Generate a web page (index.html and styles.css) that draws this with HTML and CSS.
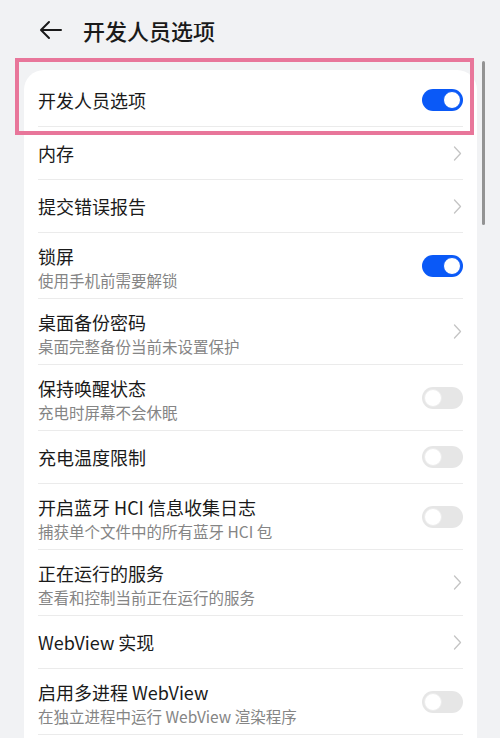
FILE: index.html
```html
<!DOCTYPE html>
<html lang="zh-CN">
<head>
<meta charset="utf-8">
<link rel="stylesheet" href="styles.css">
</head>
<body>
<div class="page">
  <header class="topbar">
    <svg class="back" width="24" height="20" viewBox="0 0 24 20"><path d="M22 10H3M10 2L2 10l8 8" fill="none" stroke="#1a1a1a" stroke-width="2" stroke-linecap="round" stroke-linejoin="round"/></svg>
    <h1 class="title">开发人员选项</h1>
  </header>

  <div class="card">
    <div class="row single"><div class="text"><div class="t">开发人员选项</div></div><span class="toggle on"></span></div>
    <div class="row single"><div class="text"><div class="t">内存</div></div><svg class="chev" width="9" height="15" viewBox="0 0 9 15"><path d="M1.5 1l6 6.5-6 6.5" fill="none" stroke="#c4c4c4" stroke-width="1.3" stroke-linecap="round" stroke-linejoin="round"/></svg></div>
    <div class="row single"><div class="text"><div class="t">提交错误报告</div></div><svg class="chev" width="9" height="15" viewBox="0 0 9 15"><path d="M1.5 1l6 6.5-6 6.5" fill="none" stroke="#c4c4c4" stroke-width="1.3" stroke-linecap="round" stroke-linejoin="round"/></svg></div>
    <div class="row double"><div class="text"><div class="t">锁屏</div><div class="s">使用手机前需要解锁</div></div><span class="toggle on"></span></div>
    <div class="row double"><div class="text"><div class="t">桌面备份密码</div><div class="s">桌面完整备份当前未设置保护</div></div><svg class="chev" width="9" height="15" viewBox="0 0 9 15"><path d="M1.5 1l6 6.5-6 6.5" fill="none" stroke="#c4c4c4" stroke-width="1.3" stroke-linecap="round" stroke-linejoin="round"/></svg></div>
    <div class="row double"><div class="text"><div class="t">保持唤醒状态</div><div class="s">充电时屏幕不会休眠</div></div><span class="toggle"></span></div>
    <div class="row single"><div class="text"><div class="t">充电温度限制</div></div><span class="toggle"></span></div>
    <div class="row double"><div class="text"><div class="t">开启蓝牙 HCI 信息收集日志</div><div class="s">捕获单个文件中的所有蓝牙 HCI 包</div></div><span class="toggle"></span></div>
    <div class="row double"><div class="text"><div class="t">正在运行的服务</div><div class="s">查看和控制当前正在运行的服务</div></div><svg class="chev" width="9" height="15" viewBox="0 0 9 15"><path d="M1.5 1l6 6.5-6 6.5" fill="none" stroke="#c4c4c4" stroke-width="1.3" stroke-linecap="round" stroke-linejoin="round"/></svg></div>
    <div class="row single"><div class="text"><div class="t">WebView 实现</div></div><svg class="chev" width="9" height="15" viewBox="0 0 9 15"><path d="M1.5 1l6 6.5-6 6.5" fill="none" stroke="#c4c4c4" stroke-width="1.3" stroke-linecap="round" stroke-linejoin="round"/></svg></div>
    <div class="row double"><div class="text"><div class="t">启用多进程 WebView</div><div class="s">在独立进程中运行 WebView 渲染程序</div></div><span class="toggle"></span></div>
    <div class="row single"><div class="text"><div class="t">&nbsp;</div></div></div>
  </div>

  <div class="highlight"></div>
  <div class="scrollbar"></div>
</div>
</body>
</html>
```

FILE: styles.css
```css
html, body {
  margin: 0;
  padding: 0;
  background: #f1f2f4;
  height: 100%;
  overflow: hidden;
}
body {
  font-family: "Noto Sans CJK SC", "Noto Sans", sans-serif;
  color: #1a1a1a;
}
.page {
  position: relative;
  width: 500px;
  height: 738px;
  overflow: hidden;
}
.topbar {
  display: flex;
  align-items: center;
  height: 60px;
  padding-left: 39px;
  box-sizing: border-box;
}
.back {
  display: block;
  margin-right: 20px;
}
.title {
  margin: 0;
  font-size: 22px;
  font-weight: 500;
  line-height: 30px;
  color: #1a1a1a;
}
.card {
  margin: 10px 23px 0 24px;
  background: #fff;
  border-radius: 20px;
  padding: 4px 14px 0;
}
.row {
  display: flex;
  align-items: center;
  border-bottom: 1px solid #ebebeb;
  box-sizing: border-box;
}
.row.single {
  height: 53px;
}
.row.double {
  height: 66px;
  align-items: stretch;
}
.row.double .text {
  padding-top: 10px;
}
.row.double .toggle, .row.double .chev {
  align-self: center;
}
.text {
  flex: 1;
  min-width: 0;
}
.t {
  font-size: 18px;
  line-height: 26px;
  color: #1a1a1a;
  white-space: nowrap;
}
.s {
  font-size: 15.5px;
  line-height: 23px;
  color: #858585;
  white-space: nowrap;
}
.toggle {
  position: relative;
  width: 41px;
  height: 22px;
  border-radius: 11px;
  background: #e6e6e6;
  flex: none;
}
.toggle::after {
  content: "";
  position: absolute;
  left: 2px;
  top: 2px;
  width: 16px;
  height: 16px;
  border-radius: 50%;
  background: #fff;
  border: 1px solid #ececec;
}
.toggle.on {
  background: #0a59f7;
}
.toggle.on::after {
  left: auto;
  right: 2px;
  border-color: #0a59f7;
}
.chev {
  flex: none;
  display: block;
  margin-right: 1px;
}
.highlight {
  position: absolute;
  left: 15px;
  top: 58px;
  width: 451px;
  height: 69px;
  border: 4px solid #e8769a;
}
.scrollbar {
  position: absolute;
  left: 482px;
  top: 61px;
  width: 3px;
  height: 164px;
  border-radius: 2px;
  background: #939393;
}
```
